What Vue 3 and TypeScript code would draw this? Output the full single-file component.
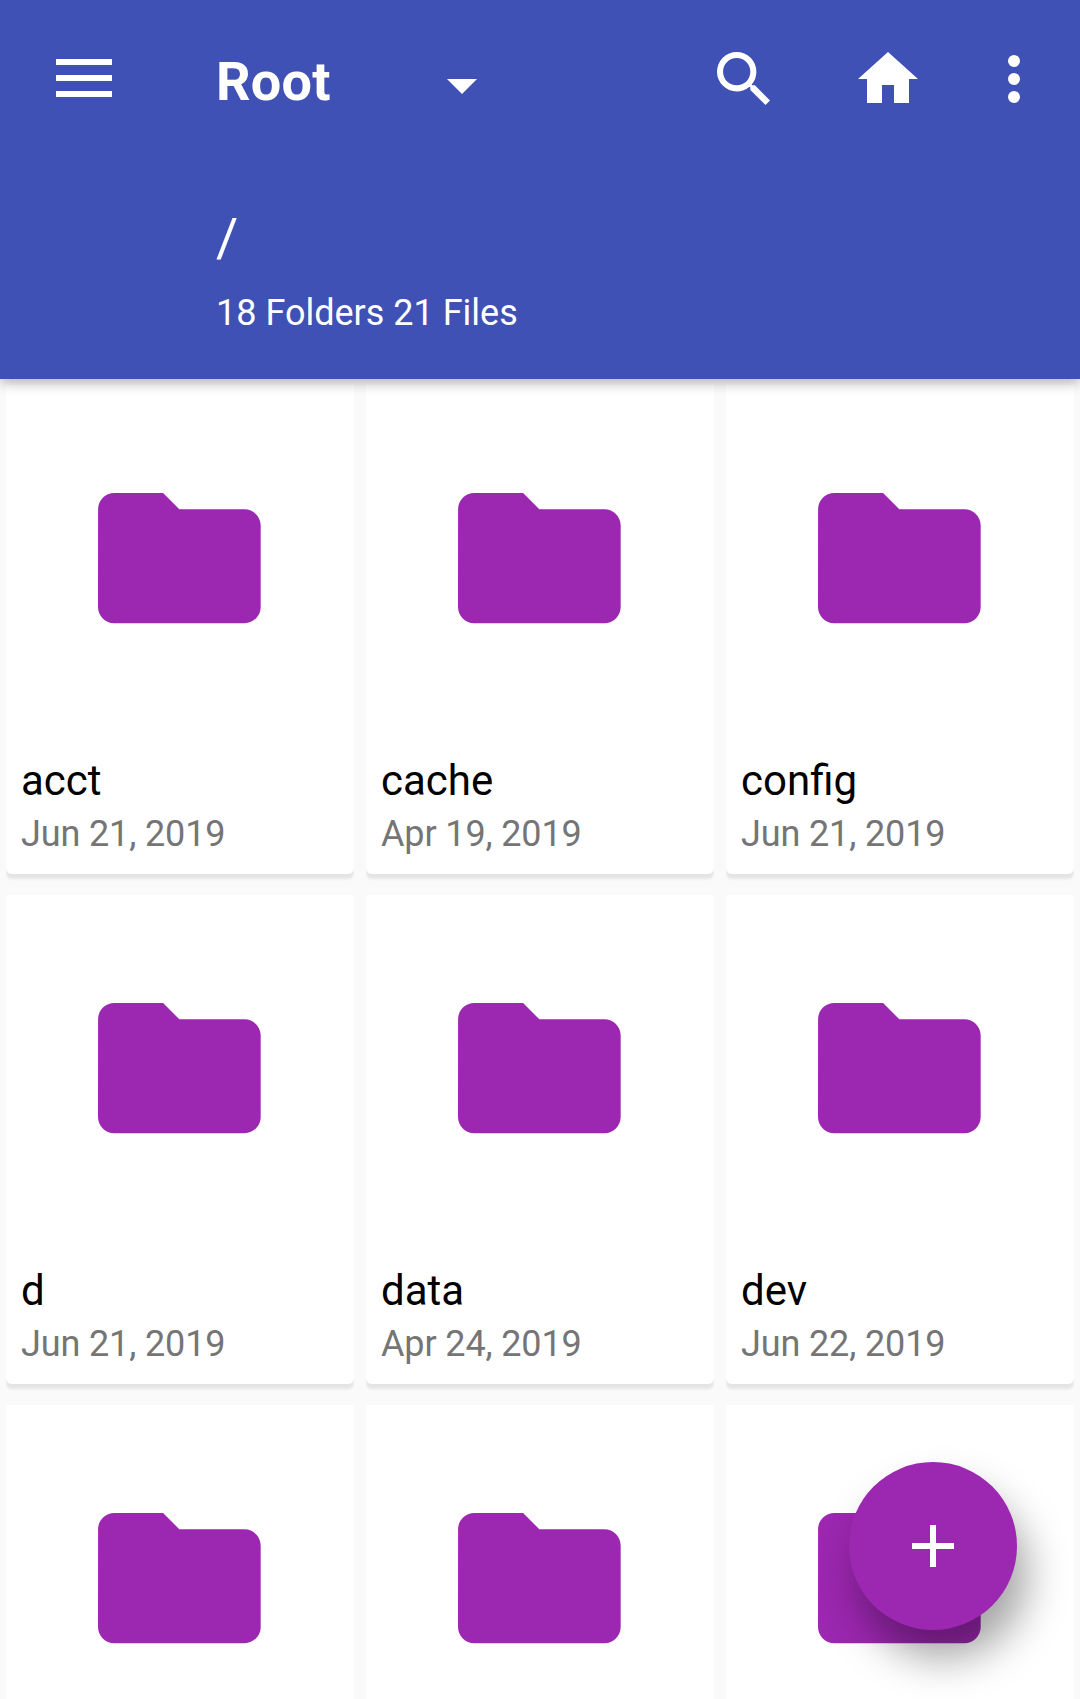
<script setup lang="ts">
interface Folder {
  name: string
  date: string
}

const folders: Folder[] = [
  { name: 'acct', date: 'Jun 21, 2019' },
  { name: 'cache', date: 'Apr 19, 2019' },
  { name: 'config', date: 'Jun 21, 2019' },
  { name: 'd', date: 'Jun 21, 2019' },
  { name: 'data', date: 'Apr 24, 2019' },
  { name: 'dev', date: 'Jun 22, 2019' },
  { name: '', date: '' },
  { name: '', date: '' },
  { name: '', date: '' },
]
</script>

<template>
  <div class="screen">
    <header class="app-bar">
      <div class="toolbar">
        <svg class="menu" viewBox="0 0 56 38" aria-label="Menu">
          <path d="M0 0h56v6H0zM0 16h56v6H0zM0 32h56v6H0z" />
        </svg>
        <h1 class="title">Root</h1>
        <svg class="caret" viewBox="0 0 30 15"><path d="M0 0h30L15 15z" /></svg>
        <svg class="search" viewBox="3 3 17.49 17.49" aria-label="Search">
          <path d="M15.5 14h-.79l-.28-.27A6.471 6.471 0 0 0 16 9.5 6.5 6.5 0 1 0 9.5 16c1.61 0 3.09-.59 4.23-1.57l.27.28v.79l5 4.99L20.49 19l-4.99-5zm-6 0C7.01 14 5 11.99 5 9.5S7.01 5 9.5 5 14 7.01 14 9.5 11.99 14 9.5 14z" />
        </svg>
        <svg class="home" viewBox="2 3 20 17" aria-label="Home">
          <path d="M10 20v-6h4v6h5v-8h3L12 3 2 12h3v8z" />
        </svg>
        <svg class="more" viewBox="0 0 12 48" aria-label="More options">
          <circle cx="6" cy="6" r="6" /><circle cx="6" cy="24" r="6" /><circle cx="6" cy="42" r="6" />
        </svg>
      </div>
      <div class="path">/</div>
      <div class="summary">18 Folders 21 Files</div>
    </header>

    <main class="grid">
      <article v-for="(folder, i) in folders" :key="i" class="card">
        <div class="thumb">
          <svg class="folder" viewBox="2 4 20 16">
            <path d="M10 4H4c-1.1 0-1.99.9-1.99 2L2 18c0 1.1.9 2 2 2h16c1.1 0 2-.9 2-2V8c0-1.1-.9-2-2-2h-8l-2-2z" />
          </svg>
        </div>
        <div class="name">{{ folder.name }}</div>
        <div class="date">{{ folder.date }}</div>
      </article>
    </main>

    <button class="fab" aria-label="Add">
      <svg viewBox="0 0 42 42"><path d="M18 0h6v18h18v6H24v18h-6V24H0v-6h18z" /></svg>
    </button>
  </div>
</template>

<style>
body {
  margin: 0;
  background: #fafafa;
}
</style>

<style scoped>
.screen {
  position: relative;
  width: 1080px;
  height: 1699px;
  overflow: hidden;
  background: #fafafa;
  font-family: Roboto, sans-serif;
}

.app-bar {
  position: relative;
  z-index: 1;
  box-sizing: border-box;
  height: 379px;
  background: #3f51b5;
  color: #fff;
  box-shadow: 0 4px 12px rgba(0, 0, 0, 0.28);
}

.toolbar {
  display: flex;
  align-items: flex-start;
  height: 202px;
}

svg {
  display: block;
  flex: none;
  fill: #fff;
}

.menu {
  width: 56px;
  height: 38px;
  margin: 59px 0 0 56px;
}

.title {
  width: 231px;
  margin: 50px 0 0 104px;
  font-size: 54px;
  line-height: 64px;
  font-weight: 700;
  letter-spacing: 0.2px;
}

.caret {
  width: 30px;
  height: 15px;
  margin-top: 79px;
}

.search {
  width: 53px;
  height: 53px;
  margin: 52px 0 0 240px;
}

.home {
  width: 60px;
  height: 51px;
  margin: 52px 0 0 88px;
}

.more {
  width: 12px;
  height: 48px;
  margin: 55px 0 0 90px;
}

.path {
  margin-left: 216px;
  font-size: 54px;
  line-height: 72px;
  height: 89px;
}

.summary {
  margin-left: 216px;
  font-size: 36px;
  line-height: 44px;
}

.grid {
  display: grid;
  grid-template-columns: repeat(3, 348px);
  grid-auto-rows: 489px;
  gap: 21px 12px;
  padding: 6px;
}

.card {
  background: #fff;
  border-radius: 0 0 6px 6px;
  box-shadow: 0 5px 3px rgba(0, 0, 0, 0.085);
  /* keeps the shadow below the card, off its sides */
  clip-path: inset(0 0 -12px 0);
}

.thumb {
  display: flex;
  align-items: center;
  justify-content: center;
  height: 348px;
}

.folder {
  width: 162.7px;
  height: 130.2px;
  margin: 0 1px 1px 0;
  fill: #9c27b0;
}

.name {
  height: 50px;
  margin: 23px 0 0 15px;
  color: #000;
  font-size: 42px;
  line-height: 50px;
}

.date {
  margin: 6px 0 0 15px;
  color: #757575;
  font-size: 36px;
  line-height: 44px;
  letter-spacing: -0.13px;
}

.fab {
  position: absolute;
  left: 849px;
  top: 1462px;
  z-index: 2;
  display: flex;
  align-items: center;
  justify-content: center;
  width: 168px;
  height: 168px;
  padding: 0;
  border: 0;
  border-radius: 50%;
  background: #9c27b0;
  box-shadow: 10px 28px 42px rgba(0, 0, 0, 0.36);
}

.fab svg {
  width: 42px;
  height: 42px;
}
</style>
